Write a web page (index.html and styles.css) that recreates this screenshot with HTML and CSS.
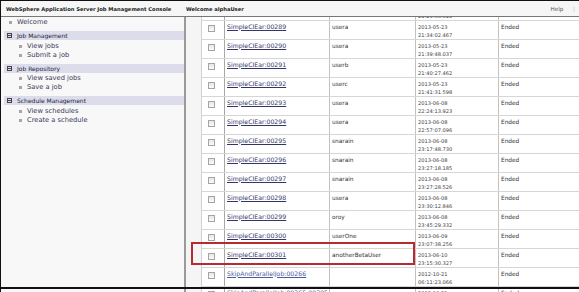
FILE: index.html
```html
<!DOCTYPE html>
<html lang="en">
<head>
    <meta charset="UTF-8">
    <meta name="viewport" content="width=device-width, initial-scale=1.0">
    <title>Job Management Console</title>
    <link rel="stylesheet" href="styles.css">
</head>
<body>

    <div class="frame">
        <div class="topbar">
            <div class="brand">WebSphere Application Server Job Management Console</div>
            <div class="welcome">Welcome alphaUser</div>
            <div class="help">Help <span class="sep">|</span></div>
        </div>

        <div class="main">
            <div class="nav">
                <div class="nav-home"><span class="bullet"></span>Welcome</div>

                <div class="section">
                    <div class="band"><span class="toggle"></span>Job Management</div>
                    <ul class="links">
                        <li><span class="bullet"></span>View jobs</li>
                        <li><span class="bullet"></span>Submit a job</li>
                    </ul>
                </div>

                <div class="section">
                    <div class="band"><span class="toggle"></span>Job Repository</div>
                    <ul class="links">
                        <li><span class="bullet"></span>View saved jobs</li>
                        <li><span class="bullet"></span>Save a job</li>
                    </ul>
                </div>

                <div class="section">
                    <div class="band"><span class="toggle"></span>Schedule Management</div>
                    <ul class="links">
                        <li><span class="bullet"></span>View schedules</li>
                        <li><span class="bullet"></span>Create a schedule</li>
                    </ul>
                </div>
            </div>

            <div class="content">
                <table class="jobs">
                    <colgroup>
                        <col class="c-check">
                        <col class="c-job">
                        <col class="c-user">
                        <col class="c-time">
                        <col class="c-state">
                    </colgroup>
                    <tbody>
                        <tr><td></td><td></td><td></td><td class="when"><br>21:29:56.310</td><td></td></tr>
                        <tr><td><input type="checkbox" class="pick"></td><td><a href="#">SimpleCIEar:00289</a></td><td>usera</td><td class="when">2013-05-23<br>21:34:02.467</td><td>Ended</td></tr>
                        <tr><td><input type="checkbox" class="pick"></td><td><a href="#">SimpleCIEar:00290</a></td><td>usera</td><td class="when">2013-05-23<br>21:39:48.037</td><td>Ended</td></tr>
                        <tr><td><input type="checkbox" class="pick"></td><td><a href="#">SimpleCIEar:00291</a></td><td>userb</td><td class="when">2013-05-23<br>21:40:27.462</td><td>Ended</td></tr>
                        <tr><td><input type="checkbox" class="pick"></td><td><a href="#">SimpleCIEar:00292</a></td><td>userc</td><td class="when">2013-05-23<br>21:41:31.598</td><td>Ended</td></tr>
                        <tr><td><input type="checkbox" class="pick"></td><td><a href="#">SimpleCIEar:00293</a></td><td>usera</td><td class="when">2013-06-08<br>22:24:13.923</td><td>Ended</td></tr>
                        <tr><td><input type="checkbox" class="pick"></td><td><a href="#">SimpleCIEar:00294</a></td><td>usera</td><td class="when">2013-06-08<br>22:57:07.096</td><td>Ended</td></tr>
                        <tr><td><input type="checkbox" class="pick"></td><td><a href="#">SimpleCIEar:00295</a></td><td>snarain</td><td class="when">2013-06-08<br>23:17:48.730</td><td>Ended</td></tr>
                        <tr><td><input type="checkbox" class="pick"></td><td><a href="#">SimpleCIEar:00296</a></td><td>snarain</td><td class="when">2013-06-08<br>23:27:18.185</td><td>Ended</td></tr>
                        <tr><td><input type="checkbox" class="pick"></td><td><a href="#">SimpleCIEar:00297</a></td><td>snarain</td><td class="when">2013-06-08<br>23:27:28.526</td><td>Ended</td></tr>
                        <tr><td><input type="checkbox" class="pick"></td><td><a href="#">SimpleCIEar:00298</a></td><td>usera</td><td class="when">2013-06-08<br>23:30:12.846</td><td>Ended</td></tr>
                        <tr><td><input type="checkbox" class="pick"></td><td><a href="#">SimpleCIEar:00299</a></td><td>oroy</td><td class="when">2013-06-08<br>23:45:29.332</td><td>Ended</td></tr>
                        <tr><td><input type="checkbox" class="pick"></td><td><a href="#">SimpleCIEar:00300</a></td><td>userOne</td><td class="when">2013-06-09<br>23:07:38.256</td><td>Ended</td></tr>
                        <tr><td><input type="checkbox" class="pick"></td><td><a href="#">SimpleCIEar:00301</a></td><td>anotherBetaUser</td><td class="when">2013-06-10<br>23:15:30.327</td><td>Ended</td></tr>
                        <tr><td><input type="checkbox" class="pick"></td><td><a href="#" class="alt">SkipAndParallelJob:00266</a></td><td></td><td class="when">2012-10-21<br>06:11:23.066</td><td>Ended</td></tr>
                        <tr><td><input type="checkbox" class="pick"></td><td><a href="#" class="alt">SkipAndParallelJob:00265-00305</a></td><td></td><td class="when">2012-10-21<br>06:10:58.212</td><td>Ended</td></tr>
                    </tbody>
                </table>
            </div>
        </div>

        <div class="callout"></div>
        <div class="edge"></div>
    </div>

</body>
</html>
```

FILE: styles.css
```css
body {
    margin: 0;
    padding: 0;
    font-family: 'DejaVu Sans', Verdana, sans-serif;
    background-color: #ffffff;
    color: #333;
}

.frame {
    position: relative;
    width: 579px;
    height: 292px;
    overflow: hidden;
    border-left: 1px solid #111;
    box-sizing: border-box;
}

/* top bar */
.topbar {
    display: flex;
    align-items: center;
    height: 14px;
    padding-top: 1px;
    border-top: 1px solid #111;
    border-bottom: 1px solid #777;
    background-color: #f6f6f6;
    font-size: 5.2px;
    color: #222;
}

.brand {
    width: 185px;
    padding-left: 5px;
    box-sizing: border-box;
    font-weight: bold;
    white-space: nowrap;
}

.welcome {
    flex: 1;
    font-weight: bold;
    white-space: nowrap;
}

.help {
    padding-right: 4px;
    font-size: 5.6px;
    color: #555;
}

.help .sep {
    margin-left: 8px;
    color: #bbb;
}

.main {
    display: flex;
    height: 275px;
}

/* navigation */
.nav {
    width: 183px;
    flex-shrink: 0;
    background-color: #f8f8f8;
    border-right: 2px solid #9a9a9a;
    padding-top: 1px;
    font-size: 6.7px;
    line-height: 9px;
    color: #3c3a58;
}

.nav-home {
    display: flex;
    align-items: center;
    padding-left: 8px;
}

.bullet {
    display: inline-block;
    width: 3px;
    height: 3px;
    margin-right: 5px;
    background-color: #a6a6a6;
}

.section {
    margin-top: 4px;
}

.band {
    display: flex;
    align-items: center;
    height: 9px;
    margin-left: 3px;
    padding-left: 3px;
    background-color: #dcdcea;
    font-size: 6px;
    color: #22223a;
}

.toggle {
    position: relative;
    width: 3px;
    height: 3px;
    margin-right: 5px;
    border: 1px solid #444;
}

.toggle::after {
    content: "";
    position: absolute;
    left: 0;
    top: 1px;
    width: 3px;
    height: 1px;
    background-color: #444;
}

.links {
    list-style: none;
    margin: 0;
    padding: 1.5px 0 0 18px;
}

.links li {
    display: flex;
    align-items: center;
}

/* job table */
.content {
    flex: 1;
    overflow: hidden;
    background-color: #f5f5f5;
    padding-left: 15px;
}

.jobs {
    table-layout: fixed;
    width: 400px;
    margin-top: -15px;
    border-collapse: collapse;
    background-color: #ffffff;
    border-left: 1px solid #d0d0d0;
    font-size: 5.8px;
    line-height: 8.25px;
    color: #333;
}

.c-check { width: 23px; }
.c-job { width: 105px; }
.c-user { width: 86px; }
.c-time { width: 83px; }
.c-state { width: 103px; }

.jobs td {
    height: 18px;
    padding: 1.5px 2px 0;
    vertical-align: top;
    white-space: nowrap;
    overflow: hidden;
    border-bottom: 1px solid #d6d6d6;
    border-right: 1px solid #c2c2c2;
    box-sizing: border-box;
}

.jobs td:first-child {
    border-right-color: #a8a8a8;
}

.jobs td.when {
    font-size: 5.1px;
    color: #444;
}

.jobs a {
    font-size: 6.2px;
    vertical-align: top;
    color: #34346a;
    text-decoration: underline;
}

.jobs a.alt {
    color: #4a5c9c;
}

.pick {
    appearance: none;
    display: block;
    width: 7px;
    height: 7px;
    margin: 2px 0 0 4px;
    border: 1px solid #a4a4a4;
    background: linear-gradient(#e6e6e6, #fbfbfb);
    box-sizing: border-box;
}

/* annotation drawn over the screenshot */
.callout {
    position: absolute;
    left: 190px;
    top: 242px;
    width: 224px;
    height: 23px;
    border: 2px solid #b82a32;
    box-sizing: border-box;
}

.edge {
    position: absolute;
    left: 0;
    right: 0;
    top: 287px;
    height: 2px;
    background-color: #111;
}
```
